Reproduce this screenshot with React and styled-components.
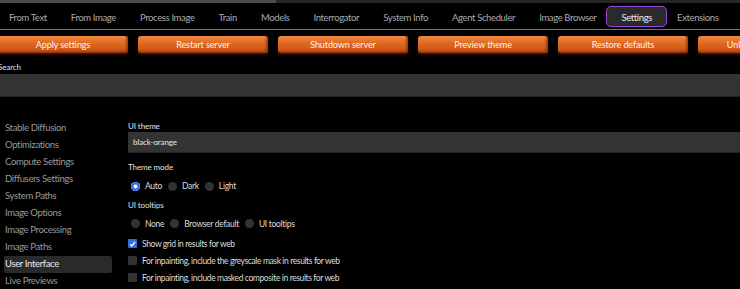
import React from "react";
import styled, { createGlobalStyle } from "styled-components";

const tabs = [
  "From Text",
  "From Image",
  "Process Image",
  "Train",
  "Models",
  "Interrogator",
  "System Info",
  "Agent Scheduler",
  "Image Browser",
  "Settings",
  "Extensions",
];

const actions = [
  "Apply settings",
  "Restart server",
  "Shutdown server",
  "Preview theme",
  "Restore defaults",
  "Unload checkpoint",
];

const sections = [
  "Stable Diffusion",
  "Optimizations",
  "Compute Settings",
  "Diffusers Settings",
  "System Paths",
  "Image Options",
  "Image Processing",
  "Image Paths",
  "User Interface",
  "Live Previews",
];

const checks = [
  { label: "Show grid in results for web", on: true },
  { label: "For inpainting, include the greyscale mask in results for web", on: false },
  { label: "For inpainting, include masked composite in results for web", on: false },
  { label: "Do not show any images in results for web", on: true },
];

const App = () => {
  return (
    <Page>
      <GlobalStyle />
      <ScrollStrip>
        <ScrollThumb />
      </ScrollStrip>
      <TabBar>
        {tabs.map((t) => (
          <Tab key={t} $active={t === "Settings"}>
            {t}
          </Tab>
        ))}
      </TabBar>
      <ActionRow>
        {actions.map((a) => (
          <ActionButton key={a}>{a}</ActionButton>
        ))}
      </ActionRow>
      <SearchBlock>
        <SmallLabel $shift>Search</SmallLabel>
        <SearchInput />
      </SearchBlock>
      <Body>
        <Sidebar>
          {sections.map((s) => (
            <SideItem key={s} $active={s === "User Interface"}>
              {s}
            </SideItem>
          ))}
        </Sidebar>
        <Main>
          <Group>
            <SmallLabel>UI theme</SmallLabel>
            <TextBox>black-orange</TextBox>
          </Group>
          <Group>
            <SmallLabel>Theme mode</SmallLabel>
            <RadioRow>
              <Radio $on>Auto</Radio>
              <Radio>Dark</Radio>
              <Radio>Light</Radio>
            </RadioRow>
          </Group>
          <Group>
            <SmallLabel>UI tooltips</SmallLabel>
            <RadioRow>
              <Radio>None</Radio>
              <Radio>Browser default</Radio>
              <Radio>UI tooltips</Radio>
            </RadioRow>
          </Group>
          <CheckList>
            {checks.map((c) => (
              <CheckRow key={c.label}>
                <CheckBox $on={c.on}>
                  {c.on && (
                    <svg width="7" height="6" viewBox="0 0 7 6">
                      <path d="M1 3.2 L2.8 5 L6 1" fill="none" stroke="#fff" strokeWidth="1.3" />
                    </svg>
                  )}
                </CheckBox>
                {c.label}
              </CheckRow>
            ))}
          </CheckList>
        </Main>
      </Body>
    </Page>
  );
};

const GlobalStyle = createGlobalStyle`
  body {
    margin: 0;
    background: #000;
    font-family: Lato, "Noto Sans", sans-serif;
    overflow: hidden;
  }
`;

const Page = styled.div`
  width: 740px;
  height: 289px;
  overflow: hidden;
  background: #000;
  color: #d8d8d8;
`;

const ScrollStrip = styled.div`
  height: 3px;
  background: #262626;
`;

const ScrollThumb = styled.div`
  width: 276px;
  height: 100%;
  background: #4b4b4b;
`;

const TabBar = styled.div`
  display: flex;
  gap: 6px;
  padding: 3px 0 2px;
  border-bottom: 1px solid #c45a1c;
  white-space: nowrap;
`;

const Tab = styled.div`
  height: 21px;
  line-height: 22px;
  padding: 0 ${(p) => (p.$active ? "14px" : "8px")};
  margin: 0 ${(p) => (p.$active ? "-5px" : "0")};
  font-size: 9.5px;
  letter-spacing: -0.37px;
  color: ${(p) => (p.$active ? "#ececec" : "#a9a9a9")};
  background: ${(p) => (p.$active ? "#2a2a2c" : "transparent")};
  border: 1px solid ${(p) => (p.$active ? "#9a44d8" : "transparent")};
  border-radius: 5px;
  box-sizing: border-box;
`;

const ActionRow = styled.div`
  display: flex;
  gap: 10px;
  padding-top: 6px;
  margin-left: -2px;
`;

const ActionButton = styled.button`
  flex: 0 0 130px;
  height: 17px;
  padding: 0;
  border: none;
  border-radius: 3px;
  background: linear-gradient(to bottom, #f08a42 0%, #e0661f 45%, #c8531a 100%);
  box-shadow: inset -2px -2px 2px rgba(120, 40, 5, 0.6), 0 2px 2px rgba(60, 20, 5, 0.9);
  color: #fff3e6;
  font-family: Lato, "Noto Sans", sans-serif;
  font-size: 9px;
  letter-spacing: -0.1px;
  white-space: nowrap;
  overflow: hidden;
`;

const SearchBlock = styled.div`
  padding-top: 8px;
`;

const SmallLabel = styled.div`
  height: 12px;
  line-height: 12px;
  font-size: 8px;
  letter-spacing: -0.1px;
  color: #e2e2e2;
  margin-left: ${(p) => (p.$shift ? "-2px" : "0")};
`;

const SearchInput = styled.div`
  height: 23px;
  margin-top: 1px;
  background: #333;
  border-bottom: 1px solid #232323;
  box-sizing: border-box;
`;

const Body = styled.div`
  display: grid;
  grid-template-columns: 108px 1fr;
  column-gap: 16px;
  padding: 22px 0 0 4px;
`;

const Sidebar = styled.div`
  display: flex;
  flex-direction: column;
  padding-top: 1px;
`;

const SideItem = styled.div`
  height: 17px;
  line-height: 16px;
  padding-left: 1px;
  font-size: 9.5px;
  letter-spacing: -0.35px;
  white-space: nowrap;
  color: ${(p) => (p.$active ? "#ececec" : "#9a9a9a")};
  background: ${(p) => (p.$active ? "#2a2a2a" : "transparent")};
  border-radius: 2px;
`;

const Main = styled.div`
  display: flex;
  flex-direction: column;
  gap: 6px;
  padding-top: 2px;
`;

const Group = styled.div`
  display: flex;
  flex-direction: column;
  gap: 6.5px;

  &:first-child {
    gap: 0;
    margin-top: -1px;
    margin-bottom: 2px;
  }
`;

const TextBox = styled.div`
  height: 21px;
  line-height: 20px;
  padding-left: 5px;
  font-size: 8px;
  letter-spacing: -0.1px;
  color: #e6e6e6;
  background: #333;
  border-bottom: 1px solid #232323;
  box-sizing: border-box;
`;

const RadioRow = styled.div`
  display: flex;
  align-items: center;
  height: 13px;
  padding-left: 3px;
`;

const Radio = styled.div`
  display: flex;
  align-items: center;
  gap: 5px;
  margin-right: 6px;
  font-size: 8.5px;
  letter-spacing: -0.3px;
  color: #dcdcdc;

  &::before {
    content: "";
    width: 9px;
    height: 9px;
    border-radius: 50%;
    box-sizing: border-box;
    background: ${(p) => (p.$on ? "#2f6fe4" : "#333")};
    box-shadow: ${(p) => (p.$on ? "inset 0 0 0 2.5px #2f6fe4, inset 0 0 0 5px #fff" : "none")};
  }
`;

const CheckList = styled.div`
  display: flex;
  flex-direction: column;
  margin-top: -1px;
`;

const CheckRow = styled.div`
  display: flex;
  align-items: center;
  gap: 5px;
  height: 17px;
  font-size: 8.5px;
  letter-spacing: -0.38px;
  color: #dcdcdc;
  white-space: nowrap;
`;

const CheckBox = styled.span`
  display: inline-flex;
  align-items: center;
  justify-content: center;
  width: 9px;
  height: 9px;
  border-radius: 1px;
  background: ${(p) => (p.$on ? "#2f6fe4" : "#333")};
`;

export default App;
